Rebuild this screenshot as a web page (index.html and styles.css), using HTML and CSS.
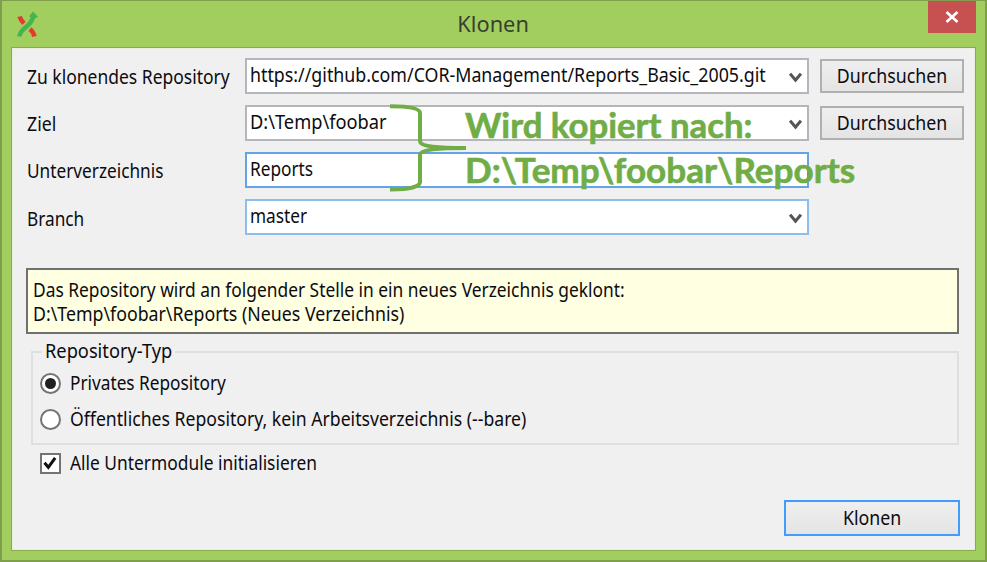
FILE: index.html
```html
<!DOCTYPE html>
<html lang="de">
<head>
<meta charset="utf-8">
<title>Klonen</title>
<link rel="stylesheet" href="styles.css">
</head>
<body>
<div class="window">
  <header class="titlebar">
    <svg class="logo" width="26" height="28" viewBox="0 0 26 28">
      <g fill="none" stroke-width="4.6">
        <path d="M3.6 5.5Q4.5 9 8 12.300" stroke="#e33a2c"/>
        <path d="M14 18Q17.500 21 18.300 25.500" stroke="#e33a2c"/>
        <path d="M3.500 25.500C4 16 15.500 17 17.500 4.500" stroke="#43b650"/>
      </g>
      <path d="M17 .5 22 5.800 18.500 7.500 13 5.500Z" fill="#43b650"/>
    </svg>
    <h1 class="title"><span class="t">Klonen</span></h1>
    <div class="close"><svg width="14" height="12" viewBox="0 0 14 12"><path d="M1.500 1 12.500 11M12.500 1 1.500 11" stroke="#fff" stroke-width="2.700"/></svg></div>
  </header>
  <main class="panel">
    <div class="form">
      <label class="label"><span class="t">Zu klonendes Repository</span></label>
      <div class="field"><span class="t url">https://github.com/COR-Management/Reports_Basic_2005.git</span><svg class="chev" viewBox="0 0 12 11"><path d="M1 1.500 6 7.500 11 1.500"/></svg></div>
      <div class="button"><span class="t">Durchsuchen</span></div>
      <label class="label"><span class="t wide">Ziel</span></label>
      <div class="field"><span class="t wider">D:\Temp\foobar</span><svg class="chev" viewBox="0 0 12 11"><path d="M1 1.500 6 7.500 11 1.500"/></svg></div>
      <div class="button"><span class="t">Durchsuchen</span></div>
      <label class="label"><span class="t narrow">Unterverzeichnis</span></label>
      <div class="field focus"><span class="t narrow">Reports</span></div>
      <div></div>
      <label class="label low"><span class="t narrow">Branch</span></label>
      <div class="field hot"><span class="t narrow">master</span><svg class="chev" viewBox="0 0 12 11"><path d="M1 1.500 6 7.500 11 1.500"/></svg></div>
    </div>
    <div class="info">
      <div><span class="t tight">Das Repository wird an folgender Stelle in ein neues Verzeichnis geklont:</span></div>
      <div><span class="t wide">D:\Temp\foobar\Reports (Neues Verzeichnis)</span></div>
    </div>
    <section class="group">
      <div class="legend"><span class="t wider">Repository-Typ</span></div>
      <div class="option"><i class="radio on"></i><span class="t narrow">Privates Repository</span></div>
      <div class="option"><i class="radio"></i><span class="t bare">Öffentliches Repository, kein Arbeitsverzeichnis (--bare)</span></div>
    </section>
    <div class="option check"><i class="box"><svg width="16" height="16" viewBox="0 0 16 16"><path d="M2.500 7.800 6.300 12.300 13.200 2.800" fill="none" stroke="#111" stroke-width="3"/></svg></i><span class="t tight">Alle Untermodule initialisieren</span></div>
    <div class="actions"><div class="button primary"><span class="t">Klonen</span></div></div>
  </main>
  <div class="note">
    <svg width="78" height="88" viewBox="0 0 78 88"><path d="M2 2.200C20 2.200 32 4 32 9V37C32 42 46 44 78 44C46 44 32 46 32 51V78C32 83 20 85.500 2 85.500" fill="none" stroke="#70ad47" stroke-width="4"/></svg>
    <div class="note-text"><div><span class="n1">Wird kopiert nach:</span></div><div><span class="n2">D:\Temp\foobar\Reports</span></div></div>
  </div>
</div>
</body>
</html>
```
FILE: styles.css
```css
* { box-sizing: border-box; }
body { margin: 0; font-family: "Noto Sans", sans-serif; font-size: 19px; line-height: 24px; color: #0c0c10; }
.window { position: relative; width: 987px; height: 562px; overflow: hidden; background: #a2ce60; border: 2px solid #7f9f4c; border-top-width: 1px; padding: 0 9px 9px; display: flex; flex-direction: column; }
.titlebar { height: 46px; display: flex; align-items: flex-start; justify-content: space-between; padding-left: 5px; }
.logo { margin-top: 10px; }
.title { margin: 9px 0 0 17px; font-size: 22px; font-weight: 400; line-height: 26px; color: #38412e; }
.title .t { transform: scaleX(.99); }
.close { width: 48px; height: 32px; background: #c75050; display: flex; align-items: center; justify-content: center; }
.panel { flex: 1; background: #f0f0f0; border: 1px solid #86ad4b; padding: 10px 0 0 14px; box-shadow: inset 0 0 0 1px #e9eee2; }
.t { display: inline-block; transform: scaleX(.92); transform-origin: 0 50%; white-space: nowrap; }
.url { transform: scaleX(.937); width: 535px; }
.narrow { transform: scaleX(.907); }
.tight { transform: scaleX(.914); }
.bare { transform: scaleX(.928); }
.wide { transform: scaleX(.934); }
.wider { transform: scaleX(.96); }
.form { display: grid; grid-template-columns: 219px 564px 144px; grid-auto-rows: 36px; row-gap: 11px; }
.label { padding: 7px 0 0 1px; }
.low { padding-top: 8px; }
.field { display: flex; justify-content: space-between; background: #fff; border: 2px solid #b4b6bb; padding: 3px 5px 0 3px; }
.focus { border-color: #62a4e7; }
.hot { border-color: #8dbdec; }
.chev { width: 13px; height: 12px; flex: none; margin-top: 9px; fill: none; stroke: #555; stroke-width: 2.9; }
.button { margin: 1px 0 0 11px; width: 144px; height: 34px; border: 2px solid #b0b0b0; background: linear-gradient(#efefef, #e4e4e4); display: flex; align-items: center; justify-content: center; }
.button .t, .title .t { transform-origin: 50% 50%; }
.button .t { transform: scaleX(.935); }
.info { margin-top: 33px; width: 933px; height: 66px; border: 2px solid #707070; background: #ffffe1; padding: 8px 5px; }
.info div { height: 24px; }
.group { margin: 17px 0 0 5px; width: 928px; height: 94px; border: 2px solid #dfdfdf; }
.legend { width: 133px; height: 24px; margin: -14px 0 0 9px; padding-left: 3px; background: #f0f0f0; }
.option { display: flex; align-items: center; gap: 9px; height: 36px; padding-left: 7px; }
.legend + .option { margin-top: 2px; }
.radio { width: 21px; height: 21px; border: 2px solid #747474; border-radius: 50%; background: #fff; display: flex; }
.on::after { content: ""; width: 11px; height: 11px; margin: 3px; border-radius: 50%; background: #202020; }
.check { padding-left: 14px; }
.box { width: 21px; height: 21px; border: 2px solid #747474; background: #fff; display: flex; }
.actions { display: flex; margin: 19px 0 0 758px; }
.primary { margin: 0; width: 176px; height: 36px; border-color: #3f9dfb; }
.note { position: absolute; left: 386px; top: 103px; display: flex; color: #70ad47; font-family: Lato, sans-serif; font-weight: 700; font-size: 34px; line-height: 45px; -webkit-text-stroke: .6px #70ad47; }
.note-text { white-space: nowrap; margin: -2px 0 0 -1px; }
.note-text span { display: inline-block; transform-origin: 0 50%; }
.n1 { transform: scaleX(1.022); }
.n2 { transform: scaleX(1.032); }
```
